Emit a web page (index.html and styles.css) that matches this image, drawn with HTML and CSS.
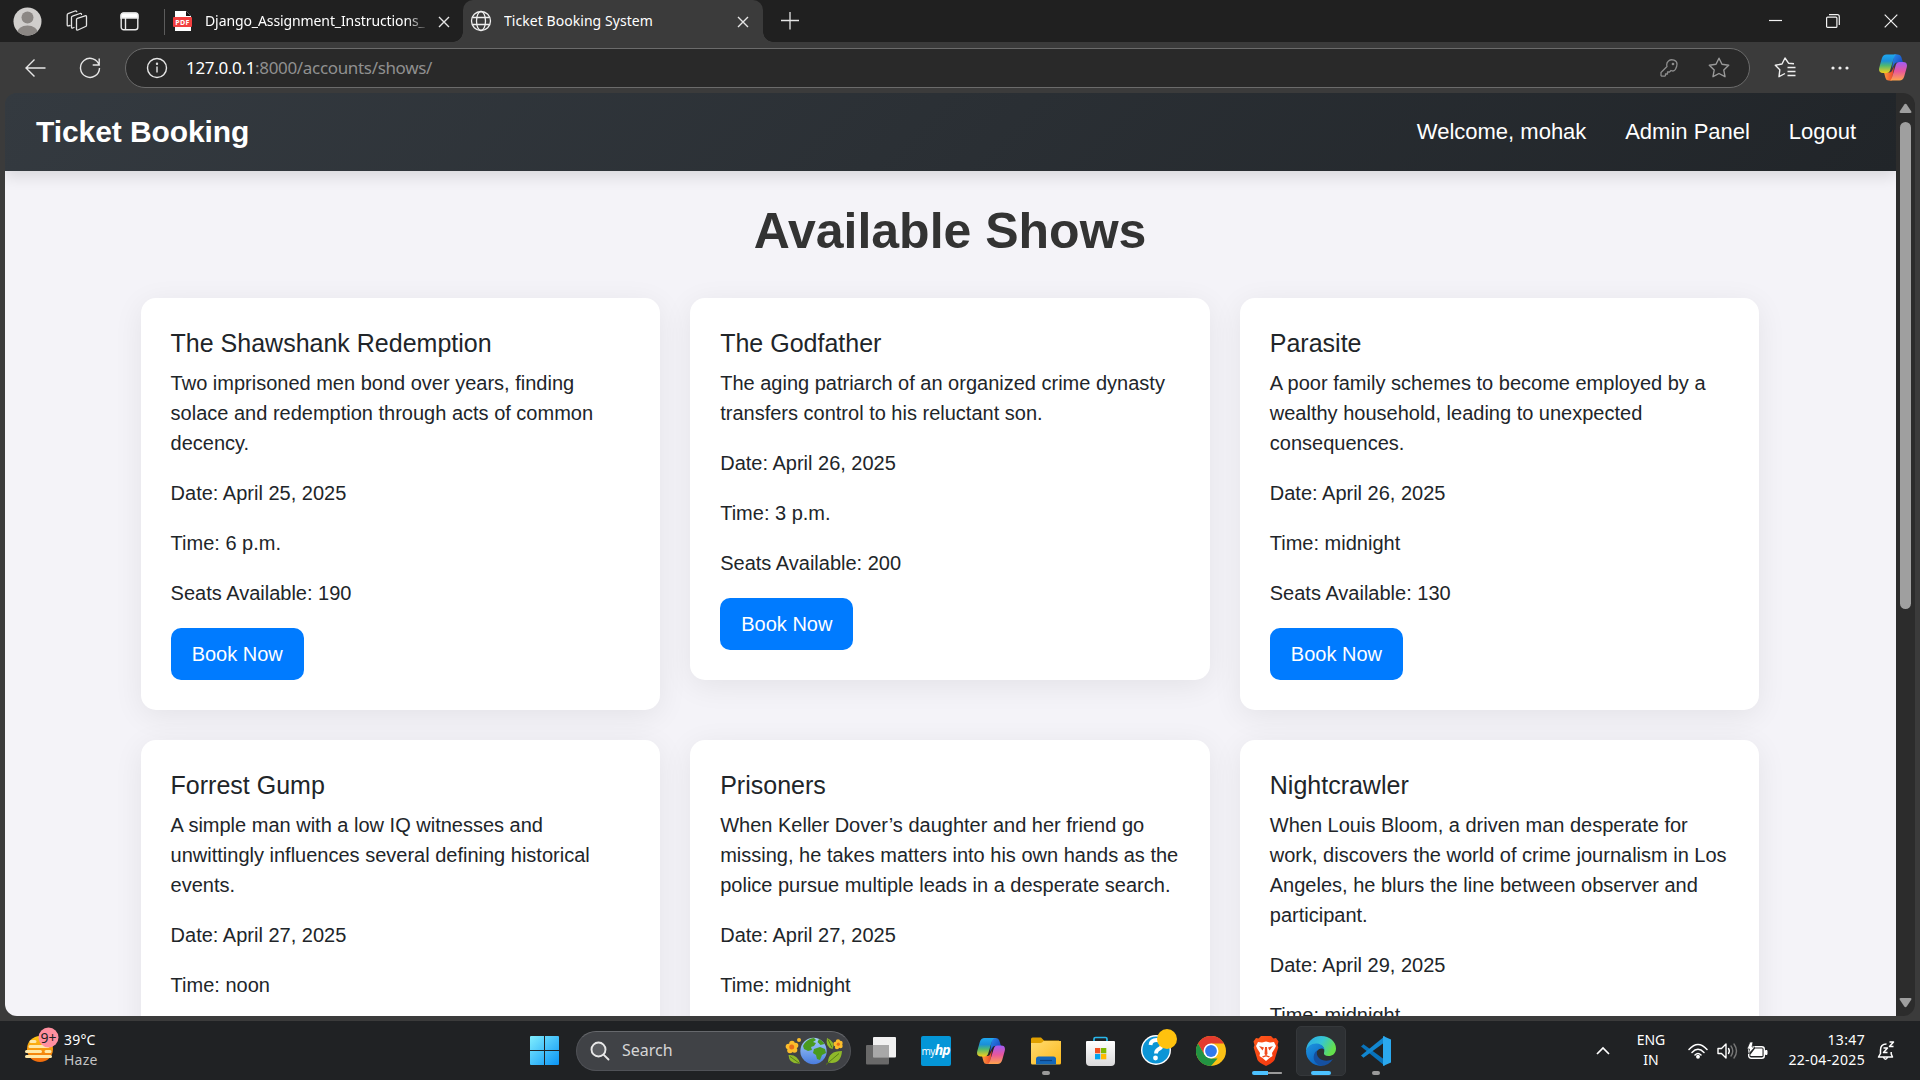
FILE: index.html
```html
<!DOCTYPE html>
<html lang="en">
<head>
<meta charset="utf-8">
<title>Ticket Booking System</title>
<link rel="stylesheet" href="styles.css">
</head>
<body>
<svg class="defs" width="0" height="0">
  <defs>
    <linearGradient id="cpA" x1="0" y1="0" x2="0" y2="1"><stop offset="0" stop-color="#1fa8f0"/><stop offset=".35" stop-color="#1b8fd8"/><stop offset=".6" stop-color="#4fb871"/><stop offset="1" stop-color="#f5cf1b"/></linearGradient>
    <linearGradient id="cpB" x1="0" y1="0" x2="0" y2="1"><stop offset="0" stop-color="#a05cf5"/><stop offset=".5" stop-color="#e8569c"/><stop offset="1" stop-color="#ffa54d"/></linearGradient>
    <linearGradient id="cpC" x1="0" y1="0" x2="1" y2="1"><stop offset="0" stop-color="#2b8cf0"/><stop offset="1" stop-color="#1238b0"/></linearGradient>
    <linearGradient id="cpD" x1="0" y1="0" x2="1" y2="0"><stop offset="0" stop-color="#ff9a3c"/><stop offset="1" stop-color="#e8402c"/></linearGradient>
    <linearGradient id="winG" gradientUnits="userSpaceOnUse" x1="0" y1="0" x2="29" y2="29"><stop offset="0" stop-color="#80eefe"/><stop offset="1" stop-color="#0a94f5"/></linearGradient>
    <linearGradient id="sunG" x1="0" y1="0" x2="0" y2="1"><stop offset="0" stop-color="#ffc813"/><stop offset="1" stop-color="#f06a0c"/></linearGradient>
    <linearGradient id="folG" x1="0" y1="0" x2="1" y2="1"><stop offset="0" stop-color="#ffdb70"/><stop offset="1" stop-color="#fcb91c"/></linearGradient>
    <linearGradient id="braG" x1="0" y1="0" x2="1" y2="1"><stop offset="0" stop-color="#ff5a1c"/><stop offset="1" stop-color="#f2330d"/></linearGradient>
    <linearGradient id="edA" x1="0" y1="0" x2="1" y2=".4"><stop offset="0" stop-color="#2aa6e8"/><stop offset=".55" stop-color="#36c5d4"/><stop offset="1" stop-color="#64e04c"/></linearGradient>
    <linearGradient id="edB" x1="0" y1="0" x2=".6" y2="1"><stop offset="0" stop-color="#1e95e0"/><stop offset="1" stop-color="#0b62c0"/></linearGradient>
    <linearGradient id="bagG" x1="0" y1="0" x2="0" y2="1"><stop offset="0" stop-color="#fff"/><stop offset="1" stop-color="#d9d9da"/></linearGradient>
    <linearGradient id="earthG" x1="0" y1="0" x2="0" y2="1"><stop offset="0" stop-color="#a5cdf8"/><stop offset="1" stop-color="#4a7de0"/></linearGradient>
    <symbol id="copilot" viewBox="0 0 28 26">
      <path d="M15 0h4q2.500 0 3.300 2.500l1.700 5.500h-6q-2 0-2.800 2L13 14Z" fill="url(#cpC)"/>
      <path d="M13 26h-3.500q-2.300 0-3-2.500L5 18h5.500q2 0 2.700-2L15 12Z" fill="url(#cpD)"/>
      <path d="M7.500 0H18q-2 0-2.800 2.500l-4 13q-.9 3-3.700 3H4q-5 0-3.700-5.500l2.500-9Q4 0 7.500 0Z" fill="url(#cpA)"/>
      <path d="M20.500 26H10q2 0 2.800-2.500l4-13q.9-3 3.700-3H24q5 0 3.700 5.500l-2.500 9Q24 26 20.500 26Z" fill="url(#cpB)"/>
    </symbol>
  </defs>
</svg>

<header class="tabstrip">
  <div class="strip-tools">
    <svg width="29" height="29" viewBox="0 0 29 29"><defs><clipPath id="av"><circle cx="14.500" cy="14.500" r="14"/></clipPath></defs><circle cx="14.500" cy="14.500" r="14" fill="#d0cecc"/><g clip-path="url(#av)" fill="#8b8784"><circle cx="14.500" cy="10.500" r="6"/><ellipse cx="14.500" cy="26" rx="10.500" ry="7.500"/></g></svg>
    <svg class="workspaces" width="22" height="22" viewBox="0 0 22 22" fill="none" stroke="#e4e4e4" stroke-width="1.300" stroke-linejoin="round" stroke-linecap="round"><path d="M10.500 9.600q0-1 .9-1.300l7.700-2.500q1.400-.4 1.400 1v8.400q0 1-.9 1.300l-7.700 3.500q-1.400.5-1.400-1z"/><path d="M8 17.500l-1.300.5q-1.200.3-1.200-1V7.500q0-1 1-1.300L14 3.500q1.300-.4 1.500.8"/><path d="M4 15.500l-1.700.3q-1.100.2-1.100-1V5q0-1 .9-1.300L9 1q1.200-.4 1.700.6"/></svg>
    <svg width="19" height="19" viewBox="0 0 19 19" fill="none" stroke="#e8e8e8" stroke-width="1.400"><rect x="1.200" y="1.200" width="16.600" height="16.600" rx="2.500"/><path d="M1 3.500Q1 1 3.500 1h12Q18 1 18 3.500V6H1z" fill="#fff"/><path d="M5.500 6v12"/></svg>
  </div>
  <div class="tab-divider"></div>
  <div class="tab tab-idle">
    <svg width="19" height="20" viewBox="0 0 19 20"><path d="M2 0h11l5 5v15H2z" fill="#fff"/><path d="M13 0l5 5h-5z" fill="#111"/><rect y="6" width="19" height="10" rx="1" fill="#f23f3f"/><text x="9.500" y="14" text-anchor="middle" class="pdf-label">PDF</text></svg>
    <span class="tab-title fade">Django_Assignment_Instructions_</span>
    <svg class="x" width="12" height="12" viewBox="0 0 12 12"><path d="M1 1l10 10M11 1L1 11"/></svg>
  </div>
  <div class="tab tab-active">
    <svg width="22" height="22" viewBox="0 0 22 22" fill="none" stroke="#eee" stroke-width="1.300"><circle cx="11" cy="11" r="9.500"/><ellipse cx="11" cy="11" rx="4.500" ry="9.500"/><path d="M2.300 7.500h17.400M2.300 14.500h17.400"/></svg>
    <span class="tab-title">Ticket Booking System</span>
    <svg class="x" width="12" height="12" viewBox="0 0 12 12"><path d="M1 1l10 10M11 1L1 11"/></svg>
  </div>
  <svg class="plus" width="18" height="18" viewBox="0 0 18 18"><path d="M0 8.500h18M9 0v17.500" stroke="#e6e6e6" stroke-width="1.300"/></svg>
  <div class="window-buttons">
    <svg width="13" height="14" viewBox="0 0 13 14"><path d="M0 6.500h13"/></svg>
    <svg width="14" height="14" viewBox="0 0 14 14"><rect x=".6" y="3.100" width="10.300" height="10.300" rx="1"/><path d="M3 .7h8.300q2 0 2 2V11"/></svg>
    <svg width="14" height="14" viewBox="0 0 14 14"><path d="M.7.7l12.600 12.600M13.300.7L.7 13.300"/></svg>
  </div>
</header>

<div class="toolbar">
  <svg class="back" width="21" height="20" viewBox="0 0 21 20"><path d="M9.500 1.500L1 10l8.500 8.500M1 10h19.500"/></svg>
  <svg class="reload" width="22" height="22" viewBox="0 0 22 22"><path d="M20.200 8.500A9.500 9.500 0 1 0 20.500 11M20.200 1.500v6.500h-6.500"/></svg>
  <div class="address">
    <svg width="22" height="22" viewBox="0 0 22 22" fill="none" stroke="#e6e6e6" stroke-width="1.400"><circle cx="11" cy="11" r="9.500"/><path d="M11 9.500v6"/><circle cx="11" cy="6.800" r=".5"/></svg>
    <span class="url"><b>127.0.0.1</b>:8000/accounts/shows/</span>
    <svg class="key" width="18" height="18" viewBox="0 0 18 18" fill="none" stroke="#8d8d8d" stroke-width="1.300" stroke-linejoin="round"><path d="M1 13.500l6-6Q6 4 8.500 2t5.500-.8 3 3.800-1.500 5.300-4.500 1.200L9.500 13H7.500v2H5.500v1.500l-.8.700H1.800L1 16.500z"/><circle cx="13" cy="5" r=".7"/></svg>
    <svg width="22" height="21" viewBox="0 0 22 21" fill="none" stroke="#9a9a9a" stroke-width="1.400" stroke-linejoin="round"><path d="M11 1.200l3 6.100 6.700 1-4.900 4.700 1.200 6.700-6-3.200-6 3.200 1.200-6.700L1.300 8.300l6.700-1z"/></svg>
  </div>
  <svg class="favs" width="22" height="21" viewBox="0 0 22 21" fill="none" stroke="#eee" stroke-width="1.400" stroke-linejoin="round"><path d="M20 6.700l-5.500-.5L11 1 8 7 1.300 8.300l4.500 4.500L5 19.700l6-3.200M13.500 10.500H21.500M13.500 14.500H21.500M13.500 18.500H21.500"/></svg>
  <svg class="dots" width="18" height="4" viewBox="0 0 18 4" fill="#eee"><circle cx="2" cy="2" r="1.600"/><circle cx="9" cy="2" r="1.600"/><circle cx="16" cy="2" r="1.600"/></svg>
  <svg width="28" height="27"><use href="#copilot"/></svg>
</div>

<div class="window-body">
  <div class="page">
    <nav class="navbar">
      <a class="brand">Ticket Booking</a>
      <div class="nav-links"><a>Welcome, mohak</a><a>Admin Panel</a><a>Logout</a></div>
    </nav>
    <main class="container">
      <h1>Available Shows</h1>
      <div class="shows">
        <article class="card"><h5>The Shawshank Redemption</h5><p>Two imprisoned men bond over years, finding solace and redemption through acts of common decency.</p><p>Date: April 25, 2025</p><p>Time: 6 p.m.</p><p>Seats Available: 190</p><a class="btn">Book Now</a></article>
        <article class="card"><h5>The Godfather</h5><p>The aging patriarch of an organized crime dynasty transfers control to his reluctant son.</p><p>Date: April 26, 2025</p><p>Time: 3 p.m.</p><p>Seats Available: 200</p><a class="btn">Book Now</a></article>
        <article class="card"><h5>Parasite</h5><p>A poor family schemes to become employed by a wealthy household, leading to unexpected consequences.</p><p>Date: April 26, 2025</p><p>Time: midnight</p><p>Seats Available: 130</p><a class="btn">Book Now</a></article>
        <article class="card"><h5>Forrest Gump</h5><p>A simple man with a low IQ witnesses and unwittingly influences several defining historical events.</p><p>Date: April 27, 2025</p><p>Time: noon</p></article>
        <article class="card"><h5>Prisoners</h5><p>When Keller Dover’s daughter and her friend go missing, he takes matters into his own hands as the police pursue multiple leads in a desperate search.</p><p>Date: April 27, 2025</p><p>Time: midnight</p></article>
        <article class="card"><h5>Nightcrawler</h5><p>When Louis Bloom, a driven man desperate for work, discovers the world of crime journalism in Los Angeles, he blurs the line between observer and participant.</p><p>Date: April 29, 2025</p><p>Time: midnight</p></article>
      </div>
    </main>
  </div>
  <div class="scrollbar">
    <svg width="13" height="11" viewBox="0 0 13 11"><path d="M5.300 1.500q1.200-1.600 2.400 0l4.500 6.800q.8 1.700-1 1.700H1.800q-1.800 0-1-1.700z"/></svg>
    <div class="thumb"></div>
    <svg class="down" width="13" height="11" viewBox="0 0 13 11"><path d="M5.300 9.500q1.200 1.600 2.400 0l4.500-6.800q.8-1.700-1-1.700H1.800Q0 1 .8 2.700z"/></svg>
  </div>
</div>

<footer class="taskbar">
  <div class="weather">
    <svg width="36" height="38" viewBox="0 0 36 38"><circle cx="16" cy="22" r="13" fill="url(#sunG)"/><g stroke="#ffe9a8" stroke-width="3" stroke-linecap="round"><path d="M7 14.500h4M6 19.500h18M2.500 24.500h14M22 24.500h4M2.500 29.500h24"/></g><circle cx="24.500" cy="10.500" r="10" fill="#ff8f9f"/><text x="24.500" y="15.500" text-anchor="middle" class="badge-label">9+</text></svg>
    <div class="weather-text"><span>39°C</span><span class="dim">Haze</span></div>
  </div>
  <div class="apps">
    <div class="slot"><svg width="29" height="29" viewBox="0 0 29 29"><path d="M1 0h13v14H0V1q0-1 1-1zM15 0h13q1 0 1 1v13H15zM0 15h14v14H1q-1 0-1-1zM15 15h14v13q0 1-1 1H15z" fill="url(#winG)"/></svg></div>
    <div class="search">
      <svg width="20" height="20" viewBox="0 0 20 20" fill="#5a5c60" stroke="#e8e8e8" stroke-width="1.900" stroke-linecap="round"><circle cx="8.500" cy="8.500" r="7"/><path d="M13.800 13.800L18.500 18.500"/></svg>
      <span>Search</span>
      <svg class="earth" width="58" height="28" viewBox="0 0 58 28">
        <g fill="#fbbd2c"><circle cx="7" cy="6.500" r="2.800"/><circle cx="3.500" cy="9.500" r="2.800"/><circle cx="5" cy="13.500" r="2.800"/><circle cx="9.500" cy="13" r="2.800"/><circle cx="10.500" cy="8.500" r="2.800"/><circle cx="14" cy="3" r="2"/><circle cx="53" cy="4.500" r="2.200"/><circle cx="50.500" cy="7" r="2.200"/><circle cx="52" cy="10" r="2.200"/><circle cx="55.500" cy="9" r="2.200"/><circle cx="55.500" cy="6" r="2.200"/></g>
        <circle cx="6.700" cy="10" r="2.500" fill="#e86f1a"/><circle cx="53.300" cy="7.200" r="1.600" fill="#e86f1a"/>
        <circle cx="28.500" cy="14" r="13.200" fill="url(#earthG)"/>
        <path d="M19 7q4-5.500 10-6l2 2-3 2 3 1-2 3-3 1 1 3-4 1-4-2-1-3zM29 12l6-2 5 2 1 4-4 2-2 5-3-1-1-4-3-2zM34 2q4 2 5.500 5l-4 1-3-3z" fill="#4a9a1e"/>
        <path d="M3.500 18q9-1 11.500 8.500Q4 27.500 3.500 18zM42 1q9 4 5.500 11Q40 10 42 1zM43 25.500Q43 14 57 14q-1 14-14 11.500z" fill="#8fb92a"/><path d="M5 19.500l9 6.500M43 2.500l4 8M41 27.500l13-11" stroke="#5a7f16" fill="none"/>
      </svg>
    </div>
    <div class="slot first"><svg width="30" height="28" viewBox="0 0 30 28"><rect x="7" y="0" width="23" height="20.500" rx="1" fill="#f1f1f1"/><path d="M1 8h6v12.500h16V26q0 1.500-1 1.500H1q-1 0-1-1V9q0-1 1-1z" fill="#696969"/><path d="M7 8h16v12.500H7z" fill="#a8a8a8"/></svg></div>
    <div class="slot"><div class="myhp">my<i>hp</i></div></div>
    <div class="slot"><svg width="28" height="26"><use href="#copilot"/></svg></div>
    <div class="slot"><svg width="30" height="28" viewBox="0 0 30 28"><path d="M0 2q0-1.500 1.500-1.500h8.500l3 3H28v5H0z" fill="#e0a000"/><path d="M0 6h9.500q1.500 0 3-2H30v22q0 1.500-1.500 1.500h-27Q0 27.500 0 26z" fill="url(#folG)"/><path d="M5 27.500V22q0-2.500 2.500-2.500h15Q25 19.500 25 22v5.500z" fill="#1467b8"/><path d="M9 23.500h12" stroke="#0b4182" stroke-width="1.200"/></svg><i class="mark"></i></div>
    <div class="slot"><svg width="29" height="30" viewBox="0 0 29 30"><path d="M8 6V3q0-1.500 1.500-1.500h10Q21 1.500 21 3v3" fill="none" stroke="#29b7ea" stroke-width="1.700"/><path d="M0 6q0-1 1-1h27q1 0 1 1v20q0 4-4 4H4q-4 0-4-4z" fill="url(#bagG)"/><path d="M9 12h5.300v5.300H9z" fill="#f25022"/><path d="M15 12h5.300v5.300H15z" fill="#7fba00"/><path d="M9 18h5.300v5.300H9z" fill="#00a4ef"/><path d="M15 18h5.300v5.300H15z" fill="#ffb900"/></svg></div>
    <div class="slot"><svg class="help" width="38" height="38" viewBox="0 0 38 38"><circle cx="16" cy="22" r="15" fill="#fff"/><circle cx="16" cy="22" r="13.600" fill="#0c95d6"/><path d="M10.500 17q.5-5 6-5t5.500 4.500q0 3-3.500 4.700-2.500 1.500-2.500 4.300" fill="none" stroke="#fff" stroke-width="3.800"/><circle cx="15.500" cy="30" r="2.400" fill="#fff"/><circle cx="27" cy="11" r="10" fill="#ffc20e"/></svg></div>
    <div class="slot"><svg width="30" height="30" viewBox="0 0 30 30"><circle cx="15" cy="15" r="15" fill="#fbc116"/><path d="M2 7.500A15 15 0 0 1 28 7.500H15L8.500 18.700z" fill="#e33b2e"/><path d="M2 7.500L8.500 18.700 15 22.500h6.500L15 30A15 15 0 0 1 2 7.500z" fill="#229342"/><circle cx="15" cy="15" r="7.500" fill="#fff"/><circle cx="15" cy="15" r="5.900" fill="#3179ec"/></svg></div>
    <div class="slot"><svg width="26" height="30" viewBox="0 0 26 30"><path d="M8 0h10l2.500 2.500L23 2l2.500 3.500-1 3.500.8 2.500-3.800 12.500q-1 2.500-8.500 6-7.500-3.500-8.500-6L.7 11.500 1.500 9 .5 5.500 3 2l2.500.5z" fill="url(#braG)"/><path d="M5 6l4 .500 4-1 4 1 4-.5 2 4-1.500 3L19 17l.500 3-3 2L13 25l-3.500-3-3-2 .5-3-2.500-4L3 10z" fill="#fff"/><path d="M6 10l5 1.500-1.500 3zM20 10l-5 1.500 1.500 3zM12 11h2l.5 7L13 19.500 11.500 18zM9 20.500l4-1.500 4 1.500-1 1-3-1-3 1z" fill="#f04a1d"/></svg><i class="mark split"></i></div>
    <div class="slot current"><svg width="30" height="30" viewBox="0 0 30 30"><path d="M0 15A15 15 0 0 1 15 0c9 0 15 6 15 12.500 0 5-3.500 7.500-7.500 7.500-3.500 0-5-1.500-4.500-3 1-3 0-7.500-6-8.500Q3 8 0 15z" fill="url(#edA)"/><path d="M0 15Q2.500 7 11 7.500c5 .5 7.500 4 7.500 6.500-1-2-5-2.500-7.500 1-2 4-1 10 6 13.500L15 30A15 15 0 0 1 0 15z" fill="url(#edB)"/><path d="M11 14.500c-2 9 8.500 12.500 16 8.500q-4.500 7-12 7C6 27 6 18 11 14.500z" fill="#1550a0"/></svg><i class="mark wide"></i></div>
    <div class="slot"><svg width="30" height="30" viewBox="0 0 30 30"><path d="M0 10.500l2.500-2.200L24 24v6z" fill="#0873bb"/><path d="M0 19.500l2.500 2.200L24 6V0z" fill="#1287d0"/><path d="M22 0l8 3.500v23L22 30z" fill="#2ba9ef"/></svg><i class="mark"></i></div>
  </div>
  <div class="tray">
    <svg width="14" height="9" viewBox="0 0 14 9"><path d="M1 8l6-6 6 6" fill="none" stroke="#fff" stroke-width="1.700"/></svg>
    <div class="lang"><span>ENG</span><span>IN</span></div>
    <svg class="wifi" width="20" height="16" viewBox="0 0 20 16" fill="none" stroke="#fff" stroke-width="1.500" stroke-linecap="round"><path d="M1 6.500q9-10 18 0M4 9.500q6-6.500 12 0M7 12q3-3 6 0"/><circle cx="10" cy="13.800" r="1.200" fill="#fff"/></svg>
    <svg class="speaker" width="21" height="18" viewBox="0 0 21 18" fill="none" stroke="#fff" stroke-width="1.400" stroke-linejoin="round" stroke-linecap="round"><path d="M1 6.500h3.500L9 2v14l-4.500-4.500H1z"/><path d="M11.500 6.500q1.700 2.500 0 5"/><path d="M14 4q3.500 5 0 10M17 2q5 7 0 14" stroke="#777"/></svg>
    <svg class="battery" width="21" height="18" viewBox="0 0 21 18"><rect x="1.700" y="4.700" width="15.600" height="11.500" rx="2.500" fill="none" stroke="#fff" stroke-width="1.400"/><path d="M18.500 8.500h1.500v4h-1.500z" fill="#fff" stroke="#fff"/><path d="M8 6.500h7.500V14H3.500v-1.500z" fill="#fff"/><path d="M3 0l-3 7h2.500L1.500 12 8 5H5L6 0z" fill="#fff" stroke="#202224" stroke-width=".7"/></svg>
    <div class="clock"><span>13:47</span><span>22-04-2025</span></div>
    <svg class="bell" width="18" height="20" viewBox="0 0 18 20" fill="none" stroke="#fff" stroke-width="1.500" stroke-linejoin="round"><path d="M9.500 3Q3.500 3 3.500 9v3.500L1.500 16h14l-1.300-3V11M6.500 16.500q2 3.500 4 0"/><path d="M6.500 7h4l-4 4.500h4M12.500 1h4l-4 4.500h4"/></svg>
  </div>
</footer>
</body>
</html>
```
FILE: styles.css
```css
* { box-sizing: border-box; }
body {
  margin: 0;
  width: 1920px;
  height: 1080px;
  overflow: hidden;
  display: flex;
  flex-direction: column;
  background: #3b3b3b;
  font-family: "Noto Sans", "Open Sans", sans-serif;
  color: #fff;
}
svg { display: block; flex: none; }
.defs { position: absolute; }

/* Browser chrome */
.tabstrip {
  height: 42px;
  flex: none;
  display: flex;
  align-items: center;
  background: #202020;
}
.strip-tools { display: flex; align-items: center; gap: 33px; padding-left: 13px; width: 164px; }
.strip-tools .workspaces { margin-left: -9px; margin-right: -1px; }
.tab-divider { width: 1px; height: 26px; background: #5c5c5c; margin-top: 2px; }
.tab { height: 42px; display: flex; align-items: center; font-size: 14px; white-space: nowrap; }
.tab-idle { width: 298px; padding: 0 13px 0 8px; }
.tab-title { margin-left: 13px; width: 224px; overflow: hidden; letter-spacing: -0.1px; margin-top: -1px; }
.fade { -webkit-mask-image: linear-gradient(90deg, #000 90%, transparent); mask-image: linear-gradient(90deg, #000 90%, transparent); }
.tab .x { margin-left: auto; margin-top: 2px; stroke: #e6e6e6; stroke-width: 1.4; }
.tab-active {
  position: relative;
  width: 300px;
  padding: 0 14px 0 7px;
  background: #3b3b3b;
  border-radius: 10px 10px 0 0;
}
.tab-active .tab-title { margin-left: 12px; letter-spacing: 0.05px; }
.tab-active::before, .tab-active::after {
  content: "";
  position: absolute;
  bottom: 0;
  width: 10px;
  height: 10px;
}
.tab-active::before { left: -10px; background: radial-gradient(circle at 0 0, #202020 9.5px, #3b3b3b 10px); }
.tab-active::after { right: -10px; background: radial-gradient(circle at 100% 0, #202020 9.5px, #3b3b3b 10px); }
.plus { margin-left: 18px; }
.pdf-label { font: bold 7px "Open Sans", sans-serif; fill: #fff; letter-spacing: 0.4px; }
.window-buttons { margin-left: auto; display: flex; gap: 44px; padding-right: 22px; }
.window-buttons svg { fill: none; stroke: #f2f2f2; stroke-width: 1.2; }

.toolbar { height: 51px; flex: none; display: flex; align-items: center; padding: 0 13px 0 25px; }
.back, .reload { fill: none; stroke: #e6e6e6; stroke-width: 1.4; }
.reload { margin-left: 33px; }
.address {
  width: 1625px;
  height: 40px;
  margin-left: 24px;
  display: flex;
  align-items: center;
  border: 1px solid #6b6b6b;
  border-radius: 20px;
  background: #292929;
  padding: 0 19px 0 20px;
}
.url { margin-left: 18px; margin-top: -1px; font-size: 17px; letter-spacing: -0.33px; color: #909090; }
.url b { font-weight: 400; color: #fff; }
.key { margin-left: auto; margin-right: 30px; }
.favs { margin-left: 24px; }
.dots { margin-left: 35px; margin-right: auto; }

.window-body { height: 923px; flex: none; display: flex; margin: 0 5px 5px; border-radius: 12px; overflow: hidden; }

/* Web page */
.page {
  width: 1891px;
  overflow: hidden;
  background: linear-gradient(#343a40 70px, #f4f3f8 70px);
  color: #212529;
  font: 20px/30px "Liberation Sans", Arial, sans-serif;
}
.navbar {
  height: 78px;
  display: flex;
  justify-content: space-between;
  align-items: center;
  padding: 0 40px 0 31px;
  background: linear-gradient(135deg, #343a40, #212529);
  box-shadow: 0 5px 15px rgba(0, 0, 0, 0.12);
  color: #fff;
}
.brand { font-size: 30px; font-weight: 700; letter-spacing: -0.08px; }
.nav-links { display: flex; gap: 38.8px; font-size: 22px; }
.container { width: 1618.8px; margin: 0 auto 0 135.6px; padding-top: 30px; }
h1 { margin: 0 0 37px; font-size: 50px; line-height: 60px; text-align: center; color: #333; }
.shows { display: grid; grid-template-columns: repeat(3, 519.6px); gap: 30px; align-items: start; }
.card {
  padding: 30px;
  border-radius: 15px;
  background: #fff;
  box-shadow: 0 6px 30px rgba(0, 0, 0, 0.07);
}
.card h5 { margin: 0 0 10px; font-size: 25px; line-height: 30px; font-weight: 500; }
.card p { margin: 0 0 20px; }
.btn {
  display: block;
  width: 133.3px;
  padding: 11px 0;
  border-radius: 10px;
  background: #007bff;
  color: #fff;
  text-align: center;
}

.scrollbar { width: 19px; display: flex; flex-direction: column; align-items: center; padding: 10px 0 8px; background: #2c2c2c; }
.scrollbar svg { fill: #9f9f9f; }
.thumb { width: 11px; height: 487px; margin-top: 8px; border-radius: 6px; background: #9f9f9f; }
.scrollbar .down { margin-top: auto; }

/* Taskbar */
.taskbar { height: 59px; flex: none; display: flex; align-items: center; background: #202224; font-size: 14px; line-height: 20px; }
.weather { width: 517px; display: flex; padding-left: 24px; }
.weather svg { margin-top: -4px; }
.weather-text { display: flex; flex-direction: column; margin-left: 4px; margin-top: -1px; letter-spacing: 0.2px; }
.badge-label { font: 14px "Noto Sans", sans-serif; fill: #222; }
.dim { color: #c4c4c4; }
.apps { display: flex; align-items: center; height: 59px; }
.slot { position: relative; width: 55px; height: 50px; display: flex; align-items: center; justify-content: center; }
.slot.first { margin-left: 2px; }
.search {
  width: 275px;
  height: 40px;
  margin-left: 4px;
  display: flex;
  align-items: center;
  padding: 0 7px 0 13px;
  border-radius: 20px;
  background: #404246;
  border: 1px solid #505257;
  border-top-color: #66686c;
}
.search span { margin-left: 12px; margin-top: -1px; font-size: 16px; color: #d6d6d6; }
.earth { margin-left: auto; }
.myhp { width: 30px; height: 30px; border-radius: 2px; background: #0496d7; font: 10px/28px "Open Sans", sans-serif; text-align: center; letter-spacing: -0.5px; }
.myhp i { font-size: 14px; font-weight: 700; letter-spacing: -1px; }
.help { margin-left: 6px; margin-top: -8px; }
.mark { position: absolute; bottom: 1px; left: 24px; width: 8px; height: 4px; border-radius: 2px; background: #9a9a9a; }
.mark.wide { left: 18px; width: 20px; background: #4cc2ff; }
.mark.split { left: 14px; width: 30px; background: linear-gradient(90deg, #4cc2ff 16px, transparent 16px), linear-gradient(transparent 1px, #9a9a9a 1px, #9a9a9a 3px, transparent 3px); }
.slot.current::before { content: ""; position: absolute; inset: 0 2px 0 3px; border-radius: 5px; background: #2d3033; border: 1px solid #35383b; }
.slot.current svg { position: relative; }
.tray { margin-left: auto; display: flex; align-items: center; padding-right: 25px; white-space: nowrap; }
.lang, .clock { display: flex; flex-direction: column; margin-top: -1px; }
.lang { align-items: center; width: 30px; margin-left: 26px; }
.wifi { margin-left: 22px; }
.speaker { margin-left: 9px; }
.battery { margin-left: 9px; }
.clock { align-items: flex-end; width: 78px; margin-left: 19px; letter-spacing: 0.35px; }
.bell { margin-left: 12px; }
```
